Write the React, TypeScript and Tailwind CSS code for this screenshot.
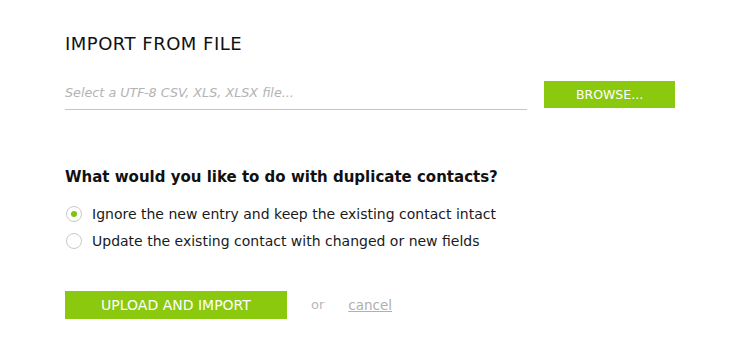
import { useState } from 'react';

export default function App() {
  const [mode, setMode] = useState<'ignore' | 'update'>('ignore');

  const options = [
    { id: 'ignore' as const, label: 'Ignore the new entry and keep the existing contact intact' },
    { id: 'update' as const, label: 'Update the existing contact with changed or new fields' },
  ];

  return (
    <div className="w-[734px] h-[351px] bg-white font-['DejaVu_Sans',Verdana,sans-serif] text-[#111] pl-[65px] pr-[40px] pt-[32px]">
      {/* File picker */}
      <h1 className="text-[18px] leading-[24px] tracking-[0.5px]">IMPORT FROM FILE</h1>

      <div className="flex items-start mt-[25px]">
        <div className="w-[462px] shrink-0 h-[29px] border-b border-[#c4c4c4] flex items-end pb-[8px]">
          <span className="text-[12.75px] italic text-[#b3b3b3] leading-[16px]">
            Select a UTF-8 CSV, XLS, XLSX file...
          </span>
        </div>
        <button className="ml-[17px] shrink-0 w-[131px] h-[27px] bg-[#8bc90f] text-white text-[12.5px] leading-[27px] text-center">
          BROWSE...
        </button>
      </div>

      {/* Duplicates */}
      <h2 className="mt-[56px] text-[15px] font-bold leading-[22px]">
        What would you like to do with duplicate contacts?
      </h2>

      <div className="mt-[16px] flex flex-col gap-[7px]">
        {options.map((o) => (
          <label key={o.id} className="flex items-center h-[20px] cursor-pointer" onClick={() => setMode(o.id)}>
            <span className="w-[16px] h-[16px] ml-[1px] rounded-full border border-[#c8c8c8] flex items-center justify-center">
              {mode === o.id && <span className="w-[6px] h-[6px] rounded-full bg-[#7ec40a]" />}
            </span>
            <span className="ml-[10px] text-[14px] leading-[20px] text-[#1a1a1a]">{o.label}</span>
          </label>
        ))}
      </div>

      {/* Actions */}
      <div className="mt-[40px] flex items-center">
        <button className="w-[222px] h-[28px] bg-[#8bc90f] text-white text-[14px] leading-[28px] text-center">
          UPLOAD AND IMPORT
        </button>
        <span className="ml-[24px] text-[13px] text-[#b8b8b8]">or</span>
        <a href="#" className="ml-[24px] text-[13.5px] text-[#b0b0b0] underline">
          cancel
        </a>
      </div>
    </div>
  );
}
